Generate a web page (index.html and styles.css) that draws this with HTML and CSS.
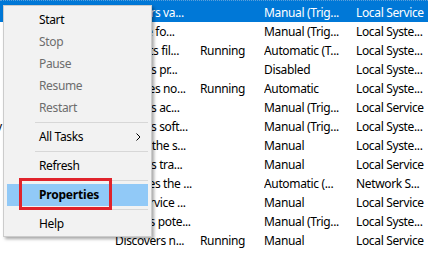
FILE: index.html
```html
<!DOCTYPE html>
<html>
<head>
<meta charset="utf-8">
<link rel="stylesheet" href="styles.css">
</head>
<body>
<div class="list">
  <div class="row sel"><span class="c"></span><span class="c">Answers va...</span><span class="c"></span><span class="c">Manual (Trig...</span><span class="c">Local Service</span></div>
  <div class="row"><span class="c"></span><span class="c">Service fo...</span><span class="c"></span><span class="c">Manual (Trig...</span><span class="c">Local Syste...</span></div>
  <div class="row"><span class="c"></span><span class="c">Protects fil...</span><span class="c">Running</span><span class="c">Automatic (T...</span><span class="c">Local Syste...</span></div>
  <div class="row"><span class="c"></span><span class="c">Enables pr...</span><span class="c"></span><span class="c">Disabled</span><span class="c">Local Syste...</span></div>
  <div class="row"><span class="c"></span><span class="c">Provides no...</span><span class="c">Running</span><span class="c">Automatic</span><span class="c">Local Syste...</span></div>
  <div class="row"><span class="c"></span><span class="c">Enables ac...</span><span class="c"></span><span class="c">Manual (Trig...</span><span class="c">Local Service</span></div>
  <div class="row"><span class="c name">v</span><span class="c">Enables soft...</span><span class="c"></span><span class="c">Manual (Trig...</span><span class="c">Local Syste...</span></div>
  <div class="row"><span class="c"></span><span class="c">Allows the s...</span><span class="c"></span><span class="c">Manual</span><span class="c">Local Syste...</span></div>
  <div class="row"><span class="c"></span><span class="c">Enables tra...</span><span class="c"></span><span class="c">Manual</span><span class="c">Local Service</span></div>
  <div class="row"><span class="c"></span><span class="c">Provides the ...</span><span class="c"></span><span class="c">Automatic (...</span><span class="c">Network S...</span></div>
  <div class="row"><span class="c"></span><span class="c">The service ...</span><span class="c"></span><span class="c">Manual</span><span class="c">Local Service</span></div>
  <div class="row"><span class="c"></span><span class="c">Detects pote...</span><span class="c"></span><span class="c">Manual (Trig...</span><span class="c">Local Syste...</span></div>
  <div class="row"><span class="c"></span><span class="c">Discovers n...</span><span class="c">Running</span><span class="c">Manual</span><span class="c">Local Service</span></div>
</div>

<div class="menu">
  <div class="item">Start</div>
  <div class="item dis">Stop</div>
  <div class="item dis">Pause</div>
  <div class="item dis">Resume</div>
  <div class="item dis">Restart</div>
  <div class="sep"></div>
  <div class="item sub"><span>All Tasks</span><svg class="arrow" width="5" height="8" viewBox="0 0 5 8"><polyline points="0.5,0.5 4,4 0.5,7.5" fill="none" stroke="#000" stroke-width="1"/></svg></div>
  <div class="sep"></div>
  <div class="item">Refresh</div>
  <div class="sep"></div>
  <div class="item hl">Properties</div>
  <div class="sep"></div>
  <div class="item">Help</div>
</div>

<div class="callout"></div>
</body>
</html>
```

FILE: styles.css
```css
html, body {
  margin: 0;
  padding: 0;
}
body {
  width: 444px;
  height: 253px;
  overflow: hidden;
  position: relative;
  background: #fff;
  font-family: "Noto Sans", "Open Sans", sans-serif;
  font-size: 12px;
  letter-spacing: -0.35px;
  color: #000;
}
.list {
  width: 428px;
}
.row {
  display: grid;
  grid-template-columns: 115px 85px 64px 92px 72px;
  height: 19px;
  line-height: 19px;
  white-space: nowrap;
}
.row.sel {
  height: 22px;
  box-sizing: border-box;
  padding-top: 2px;
  border-top: 1px dotted #5c9fd9;
  background: #0078d7;
  color: #fff;
}
.c {
  overflow: hidden;
}
.name {
  text-indent: -4px;
}
.menu {
  position: absolute;
  left: 3px;
  top: 5px;
  width: 149px;
  box-sizing: border-box;
  padding: 3px 3px 1px;
  background: #f2f2f2;
  border: 1px solid #cccccc;
  box-shadow: 2px 2px 3px rgba(0, 0, 0, 0.35);
}
.item {
  height: 22px;
  line-height: 22px;
  padding-left: 32px;
  padding-right: 7px;
  white-space: nowrap;
}
.item.dis {
  color: #6d6d6d;
}
.item.sub {
  display: flex;
  justify-content: space-between;
  align-items: center;
}
.item.hl {
  background: #91c9f7;
  font-weight: 700;
  letter-spacing: -0.2px;
}
.sep {
  height: 1px;
  margin: 3px 0 3px 28px;
  background: #d7d7d7;
}
.callout {
  position: absolute;
  left: 19px;
  top: 178px;
  width: 93px;
  height: 32px;
  box-sizing: border-box;
  border: 3px solid #e0232b;
}
```
